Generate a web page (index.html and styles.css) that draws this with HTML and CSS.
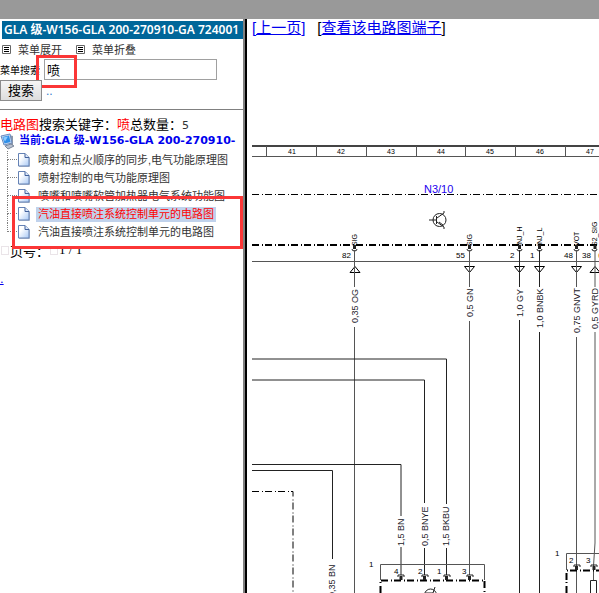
FILE: index.html
```html
<!DOCTYPE html>
<html lang="zh">
<head>
  <title>电路图</title>
  <meta charset="UTF-8">
  <link rel="stylesheet" href="styles.css">
</head>
<body>
  <svg class="defs" width="0" height="0" aria-hidden="true">
    <defs>
      <linearGradient id="paper" x1="0" y1="0" x2="1" y2="1">
        <stop offset="0.3" stop-color="#ffffff"/>
        <stop offset="1" stop-color="#a9c9f5"/>
      </linearGradient>
      <symbol id="file" viewBox="0 0 14 16">
        <path d="M2 2h7l4 4v9H2z" fill="#8a97ad" opacity="0.6"/>
        <path d="M1.5 1.5h6.500l4 4v8.500H1.500z" fill="url(#paper)" stroke="#6582b5"/>
        <path d="M8 1.500v4h4" fill="#dce9fb" stroke="#41609b"/>
      </symbol>
      <symbol id="list" viewBox="0 0 9 9">
        <path d="M.5.5h8v8h-8z" fill="#fff" stroke="#666"/>
        <path d="M2 2.500h5M2 4.500h5M2 6.500h5" stroke="#000"/>
      </symbol>
    </defs>
  </svg>

  <div class="topbar"></div>
  <div class="frames">
    <div class="sidebar">
      <h1 class="title">GLA 级-W156-GLA 200-270910-GA 724001</h1>
      <div class="menu">
        <a href="#open"><svg width="9" height="9"><use href="#list"/></svg>菜单展开</a>
        <a href="#close"><svg width="9" height="9"><use href="#list"/></svg>菜单折叠</a>
      </div>
      <form class="search">
        <div class="search-row">
          <label for="key">菜单搜索</label>
          <input type="text" id="key" class="search-box" value="喷">
          <div class="mark mark-search"></div>
        </div>
        <div class="search-row">
          <button type="button" class="search-button">搜索</button>
          <a href="#more" class="more">..</a>
        </div>
      </form>
      <div class="result"><span class="red">电路图</span>搜索关键字：<span class="red">喷</span>总数量：<span class="count">5</span></div>
      <div class="root">
        <svg width="16" height="17" viewBox="0 0 16 17">
          <path d="M9 2l4 1v10l-4 2z" fill="#8d98aa"/>
          <path d="M1 3l9-2 2 9-8 2z" fill="#c9d9ef" stroke="#6b8cc0"/>
          <path d="M2.500 4l6.500-1.500 1.500 6.500-6 1.500z" fill="#2f8fe8"/>
          <path d="M3 4.500l5-1-3 5z" fill="#8ecbff"/>
          <path d="M5 13l6-2 3 2-6 3z" fill="#b8c2d2" stroke="#7d889b"/>
        </svg>
        <a href="#root">当前:GLA 级-W156-GLA 200-270910-</a>
      </div>
      <div class="tree-wrap">
        <ul class="tree">
          <li><span class="branch"></span><svg width="14" height="16"><use href="#file"/></svg><a href="#1">喷射和点火顺序的同步,电气功能原理图</a></li>
          <li><span class="branch"></span><svg width="14" height="16"><use href="#file"/></svg><a href="#2">喷射控制的电气功能原理图</a></li>
          <li><span class="branch"></span><svg width="14" height="16"><use href="#file"/></svg><a href="#3">喷嘴和喷嘴软管加热器电气系统功能图</a></li>
          <li><span class="branch"></span><svg width="14" height="16"><use href="#file"/></svg><a href="#4" class="selected">汽油直接喷注系统控制单元的电路图</a></li>
          <li><span class="branch"></span><svg width="14" height="16"><use href="#file"/></svg><a href="#5">汽油直接喷注系统控制单元的电路图</a></li>
        </ul>
        <div class="mark mark-tree"></div>
      </div>
      <div class="pager"><span class="box"></span>页号：<span class="box"></span><span class="pages">1 / 1</span></div>
      <a href="#end" class="dot">.</a>
    </div>

    <div class="content">
      <div class="links">
        <a href="#prev">[上一页]</a>
        <span>[<a href="#pins">查看该电路图端子</a>]</span>
      </div>
      <svg class="diagram" width="347" height="555" viewBox="252 38 347 555">
        <!-- ruler -->
        <path class="edge" d="M252 146H599"/>
        <path class="thin" d="M252 156.500H599M266.500 146v10M316.500 146v10M366.500 146v10M416.500 146v10M465.500 146v10M515.500 146v10M565.500 146v10"/>
        <g class="tiny mid">
          <text x="292" y="154">41</text>
          <text x="341" y="154">42</text>
          <text x="391" y="154">43</text>
          <text x="441" y="154">44</text>
          <text x="490" y="154">45</text>
          <text x="540" y="154">46</text>
          <text x="590" y="154">47</text>
        </g>

        <!-- control unit N3/10 -->
        <path class="dash" d="M252 194.500H599"/>
        <path class="dash thick" d="M252 245H599"/>
        <path class="thin" d="M252 261.500H599"/>
        <text class="unit" x="424" y="193">N3/10</text>
        <g class="symbol">
          <circle cx="439.500" cy="220" r="6.500"/>
          <path d="M429 220h7M436.500 216v8M437 218l7-5v-2M437 222l7 5v2M439 222l4 3"/>
        </g>
        <g class="tiny">
          <text transform="translate(357 246) rotate(-90)">SIG</text>
          <text transform="translate(472 246) rotate(-90)">SIG</text>
          <text transform="translate(522 246) rotate(-90)">INJ_H</text>
          <text transform="translate(542 246) rotate(-90)">INJ_L</text>
          <text transform="translate(579 246) rotate(-90)">VOT</text>
          <text transform="translate(597 246) rotate(-90)">S2_SIG</text>
        </g>
        <g class="pin">
          <text x="342" y="258">82</text>
          <text x="456" y="258">55</text>
          <text x="510" y="258">2</text>
          <text x="530" y="258">1</text>
          <text x="564" y="258">48</text>
          <text x="582" y="258">38</text>
          <text class="orange" x="598" y="258">6</text>
        </g>
        <path class="plug" d="M354.500 245v4M469.500 245v4M519.500 245v4M539.500 245v4M576.500 245v4M595 245v4"/>
        <path class="symbol" d="M352 249q0 2 2.500 2t2.500-2M467 249q0 2 2.500 2t2.500-2M517 249q0 2 2.500 2t2.500-2M537 249q0 2 2.500 2t2.500-2M574 249q0 2 2.500 2t2.500-2M592 249q0 2 2.500 2t2.500-2"/>
        <path class="arrow" d="M350 272.500h10l-5-6zM590 272.500h10l-5-6zM464.500 266.500h10l-5 6zM514.500 266.500h10l-5 6zM534.500 266.500h10l-5 6zM571.500 266.500h10l-5 6z"/>

        <!-- wires -->
        <path class="wire soft" d="M354.500 250V287M354.500 327V593M469.500 250V287M469.500 321V575M576.500 250V287M576.500 337V593M595 250V287M595 332V543L593.500 566V580"/>
        <path class="wire" d="M519.500 250V287M519.500 320V593M539.500 250V287M539.500 332V593"/>
        <path class="wire" d="M252 359H446.500M446.500 359V504M446.500 548V575M252 380H424.500V503M424.500 548V575"/>
        <path class="wire" d="M252 464.500H401V516M401 547V575M252 470.500H332.500V559"/>
        <path class="dash" d="M252 491.500H293V593"/>
        <g class="name">
          <text transform="translate(358 323) rotate(-90)">0,35 OG</text>
          <text transform="translate(473 317) rotate(-90)">0,5 GN</text>
          <text transform="translate(523 317) rotate(-90)">1,0 GY</text>
          <text transform="translate(543 328) rotate(-90)">1,0 BNBK</text>
          <text transform="translate(580 333) rotate(-90)">0,75 GNVT</text>
          <text transform="translate(598 329) rotate(-90)">0,5 GYRD</text>
          <text transform="translate(404 546) rotate(-90)">1,5 BN</text>
          <text transform="translate(428 546) rotate(-90)">0,5 BNYE</text>
          <text transform="translate(449 546) rotate(-90)">1,5 BKBU</text>
          <text transform="translate(335 597) rotate(-90)">0,35 BN</text>
        </g>

        <!-- connectors at the bottom -->
        <path class="thin" d="M380.500 580V564.500H484.500V580M566.500 570V553.500H599"/>
        <path class="dash thick" d="M380.500 593V580.500H484.500V593M566.500 593V570.500H599"/>
        <path class="plug" d="M401 576v4M424.500 576v4M446.500 576v4M469.500 576v4M576.500 566v4M594 566v4"/>
        <path class="symbol" d="M398 577v-2h6v2M422 577v-2h6v2M444 577v-2h6v2M467 577v-2h6v2M574 567v-2h6v2M591 567v-2h6v2"/>
        <g class="pin">
          <text x="369" y="567">1</text>
          <text x="394" y="574">4</text>
          <text x="418" y="574">2</text>
          <text x="437" y="574">1</text>
          <text x="462" y="574">3</text>
          <text x="555" y="556">1</text>
          <text x="569" y="563">2</text>
          <text x="586" y="563">3</text>
        </g>
        <g class="symbol">
          <circle cx="430.500" cy="595" r="6"/>
          <path d="M425 593h8l2-6M428 597l5-4"/>
          <path d="M590.500 580.500h6v13h-6z"/>
        </g>
      </svg>
    </div>
  </div>
</body>
</html>
```
FILE: styles.css
```css
body {
  font-family: "Liberation Sans", "Noto Sans CJK SC", sans-serif;
  margin: 0;
  height: 100vh;
  display: flex;
  flex-direction: column;
  overflow: hidden;
  background-color: #ffffff;
  color: #000000;
}
.defs {
  position: absolute;
}
.topbar {
  flex: none;
  height: 19px;
  background-color: #999999;
}
.frames {
  flex: 1;
  min-height: 0;
  display: flex;
}
.sidebar {
  flex: none;
  width: 243px;
  overflow: hidden;
  white-space: nowrap;
  border-right: 2px solid #808080;
}
.title {
  margin: 2px 0 0 2px;
  padding-left: 2px;
  height: 18px;
  line-height: 18px;
  overflow: hidden;
  font-family: "Noto Sans", "Noto Sans CJK SC", sans-serif;
  font-size: 12px;
  font-weight: 600;
  background-color: #006699;
  color: #ffffff;
}
.menu {
  display: flex;
  gap: 14px;
  height: 20px;
  padding-left: 2px;
  font-size: 11px;
}
.menu a {
  display: flex;
  align-items: center;
  gap: 7px;
  color: #333333;
  text-decoration: none;
}
.search {
  padding-bottom: 8px;
  border-bottom: 1px solid #808080;
}
.search-row {
  position: relative;
  display: flex;
  align-items: center;
  gap: 4px;
  height: 21px;
}
.search-row label {
  font-size: 10px;
}
.search-box {
  box-sizing: border-box;
  width: 173px;
  height: 21px;
  padding: 0 2px;
  border: 1px solid #a0a0a0;
  font-family: inherit;
  font-size: 13px;
}
.search-button {
  box-sizing: border-box;
  width: 42px;
  height: 21px;
  padding: 0;
  border: 1px solid #8c8c8c;
  border-radius: 0;
  background: linear-gradient(#f5f5f5, #dddddd);
  font-family: inherit;
  font-size: 13px;
  line-height: 18px;
}
.more {
  font-size: 12px;
  color: #3377cc;
  text-decoration: none;
}
.mark {
  position: absolute;
  box-sizing: border-box;
  border: 3px solid #fb3636;
  pointer-events: none;
}
.mark-search {
  left: 36px;
  top: -4px;
  width: 41px;
  height: 33px;
}
.mark-tree {
  left: 12px;
  right: 0;
  top: 45px;
  height: 53px;
}
.result {
  margin-top: 6px;
  height: 17px;
  line-height: 18px;
  font-size: 13px;
}
.red {
  color: #ff0000;
}
.count {
  font-family: "DejaVu Sans", sans-serif;
  font-size: 11px;
  color: #333333;
}
.root {
  display: flex;
  align-items: flex-start;
  gap: 3px;
  height: 18px;
}
.root svg {
  flex: none;
}
.root a {
  font-family: "DejaVu Sans", "Noto Sans CJK SC", sans-serif;
  font-size: 11px;
  font-weight: bold;
  line-height: 16px;
  color: #0000ee;
  text-decoration: none;
}
.tree-wrap {
  position: relative;
}
.tree {
  margin: 0;
  padding: 0 0 0 7px;
  list-style: none;
  font-size: 11px;
}
.tree li {
  display: flex;
  align-items: center;
  height: 18px;
}
.tree a {
  margin-left: 5px;
  padding: 0 2px;
  line-height: 15px;
  color: #333333;
  text-decoration: none;
}
.tree a.selected {
  background-color: #c0d2ec;
  color: #ff0000;
}
.branch {
  width: 10px;
}
.branch::before,
.branch::after {
  content: "";
  display: block;
  box-sizing: border-box;
  height: 9px;
  border-left: 1px dotted #808080;
}
.branch::before {
  border-bottom: 1px dotted #808080;
}
.tree li:last-child .branch::after {
  border-left-color: transparent;
}
.pager {
  display: flex;
  align-items: center;
  height: 18px;
  font-size: 13px;
}
.box {
  width: 6px;
  height: 7px;
  margin: 0 1px;
  border: 1px solid #eae4e8;
}
.pages {
  font-family: "Liberation Serif", serif;
}
.dot {
  display: block;
  margin-top: 12px;
  font-size: 13px;
}
.content {
  flex: 1;
  min-width: 0;
  overflow: hidden;
  padding-left: 5px;
  border-left: 2px solid #000000;
}
.links {
  display: flex;
  gap: 12px;
  height: 19px;
  line-height: 18px;
  font-size: 15px;
  white-space: nowrap;
}
.links a {
  color: #0000ee;
}
.diagram {
  display: block;
}
.diagram path,
.diagram circle {
  fill: none;
  stroke: #222222;
}
.diagram .edge {
  stroke: #444444;
  stroke-width: 2;
}
.diagram .thin {
  stroke: #555555;
}
.diagram .soft {
  stroke: #555555;
}
.diagram .dash {
  stroke: #000000;
  stroke-width: 1;
  stroke-dasharray: 7 3 1 2;
}
.diagram .thick {
  stroke-width: 2;
}
.diagram .plug {
  stroke-width: 3;
}
.diagram .arrow {
  stroke: #000000;
}
.tiny {
  font-size: 7px;
}
.mid {
  text-anchor: middle;
}
.pin {
  font-size: 8px;
}
.name {
  font-size: 9px;
  fill: #221a2a;
}
.unit {
  font-size: 11px;
  fill: #2200ee;
}
.orange {
  fill: #e07820;
}
```
